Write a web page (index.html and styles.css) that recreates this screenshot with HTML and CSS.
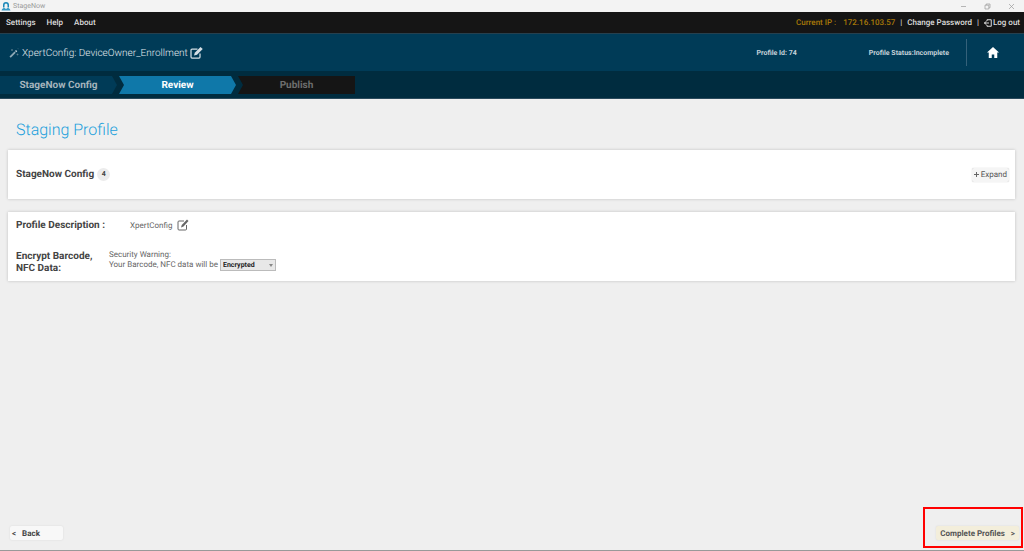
FILE: index.html
```
<!DOCTYPE html>
<html lang="en">
<head>
    <meta charset="UTF-8">
    <meta name="viewport" content="width=device-width, initial-scale=1.0">
    <title>StageNow</title>
    <link rel="stylesheet" href="styles.css">
</head>
<body>
    <div class="titlebar">
        <svg class="app-icon" width="10" height="10" viewBox="0 0 20 20">
            <path d="M4 8a6 6 0 0 1 12 0v5h-3V8a3 3 0 0 0-6 0v5H4z" fill="#1b87b8"/>
            <path d="M1 19c1-4 4-5 6-5l3 2 3-2c2 0 5 1 6 5z" fill="#3a9bc6"/>
        </svg>
        <span class="app-name">StageNow</span>
        <div class="window-buttons">
            <button type="button" aria-label="Minimize">
                <svg width="7" height="7" viewBox="0 0 7 7"><path d="M1 3.5h5"/></svg>
            </button>
            <button type="button" aria-label="Restore">
                <svg width="7" height="7" viewBox="0 0 7 7"><path d="M1 2.2h3.8v3.8H1zM2.2 2V1H6v3.8H5"/></svg>
            </button>
            <button type="button" aria-label="Close">
                <svg width="7" height="7" viewBox="0 0 7 7"><path d="M1 1l5 5M6 1L1 6"/></svg>
            </button>
        </div>
    </div>

    <nav class="menubar">
        <a href="#">Settings</a>
        <a href="#">Help</a>
        <a href="#">About</a>
        <div class="menu-right">
            <span class="ip-label">Current IP :</span>
            <span class="ip-value">172.16.103.57</span>
            <span class="bar">|</span>
            <a href="#">Change Password</a>
            <span class="bar">|</span>
            <a href="#" class="logout">
                <svg width="8" height="8" viewBox="0 0 16 16" fill="none" stroke="currentColor" stroke-width="2">
                    <path d="M6 4V1.5h8.5v13H6V12M0 8h10"/>
                    <path d="M5 4.5L1 8l4 3.5"/>
                </svg>
                Log out
            </a>
        </div>
    </nav>

    <header class="profile-header">
        <svg class="wand" width="10" height="10" viewBox="0 0 20 20">
            <path d="M1 17L11 7l2.5 2.5L3.5 19.5z" fill="#8fa9b6"/>
            <path d="M12 6l2-2 2.5 2.5-2 2z" fill="#c9d6dd"/>
            <path d="M6 2v4M4 4h4M17 11v4M15 13h4M18 1l1.5 1.5" stroke="#6f8d9c" stroke-width="1.2"/>
        </svg>
        <h1>XpertConfig: DeviceOwner_Enrollment</h1>
        <button type="button" class="icon-button" aria-label="Edit profile name">
            <svg width="13" height="12" viewBox="0 0 26 24">
                <path d="M15 4H4Q2 4 2 6v14q0 2 2 2h14q2 0 2-2v-7" fill="none" stroke="currentColor" stroke-width="2.5"/>
                <path d="M8 17l1.5-5.5L21 0l4.5 4L14 15.5z" fill="currentColor"/>
            </svg>
        </button>
        <span class="profile-id">Profile Id: 74</span>
        <span class="profile-status">Profile Status:Incomplete</span>
        <a href="#" class="home" aria-label="Home">
            <svg width="12" height="11" viewBox="0 0 24 22">
                <path d="M12 0l12 11h-3.5v11h-6v-7h-5v7h-6V11H0z" fill="#fff"/>
            </svg>
        </a>
    </header>

    <nav class="steps">
        <a href="#" class="step step-done">StageNow Config</a>
        <a href="#" class="step step-active">Review</a>
        <a href="#" class="step step-next">Publish</a>
    </nav>

    <main>
        <h2>Staging Profile</h2>

        <section class="card config-card">
            <h3>StageNow Config</h3>
            <span class="count">4</span>
            <button type="button" class="expand"><svg width="5" height="5" viewBox="0 0 5 5"><path d="M2.5 0v5M0 2.5h5" stroke="#666"/></svg>Expand</button>
        </section>

        <section class="card details-card">
            <div class="description-row">
                <h3>Profile Description :</h3>
                <span>XpertConfig</span>
                <button type="button" class="icon-button dark" aria-label="Edit description">
                    <svg width="12" height="12" viewBox="0 0 24 24">
                        <path d="M14 4H4Q2 4 2 6v14q0 2 2 2h13q2 0 2-2v-8" fill="none" stroke="currentColor" stroke-width="2"/>
                        <path d="M8 17l1.5-5L20 1l3 3-10 11z" fill="currentColor"/>
                    </svg>
                </button>
            </div>
            <div class="encrypt-row">
                <h3>Encrypt Barcode,<br>NFC Data:</h3>
                <label for="encryption">Security Warning:<br>Your Barcode, NFC data will be</label>
                <div class="select-box">
                    <select id="encryption">
                        <option>Encrypted</option>
                        <option>Not Encrypted</option>
                    </select>
                    <svg class="arrow" width="4" height="3" viewBox="0 0 4 3"><path d="M0 0h4L2 3z" fill="#888"/></svg>
                </div>
            </div>
        </section>
    </main>

    <footer>
        <button type="button" class="back"><span>&lt;</span>Back</button>
        <div class="complete-box">
            <button type="button" class="complete">Complete Profiles<span>&gt;</span></button>
        </div>
    </footer>
</body>
</html>
```

FILE: styles.css
```
* {
    box-sizing: border-box;
}

body {
    margin: 0;
    min-height: 100vh;
    display: flex;
    flex-direction: column;
    background-color: #efefef;
    border-bottom: 1px solid #999;
    font-family: Roboto, Arial, sans-serif;
    font-size: 8px;
    color: #444;
    text-rendering: geometricPrecision;
}

h1, h2, h3 {
    margin: 0;
}

a {
    color: inherit;
    text-decoration: none;
}

button, select {
    font-family: inherit;
    color: inherit;
    text-rendering: inherit;
}

button {
    display: flex;
    align-items: center;
    border: none;
    padding: 0;
    background: none;
    cursor: pointer;
}

/* window title bar */
.titlebar {
    display: flex;
    align-items: center;
    height: 12px;
    padding: 0 9px 0 1px;
    background-color: #f3f3f3;
}

.app-name {
    margin-left: 2px;
    font-size: 7px;
    color: #999;
}

.window-buttons {
    display: flex;
    gap: 17px;
    margin-left: auto;
}

.window-buttons svg {
    fill: none;
    stroke: #999;
    stroke-width: 0.7;
}

/* menu */
.menubar {
    display: flex;
    align-items: center;
    gap: 11px;
    height: 22px;
    padding: 0 4px 0 6px;
    background-color: #151515;
    border-bottom: 1px solid #26404e;
    font-size: 8px;
    font-weight: 500;
    color: #ddd;
}

.menu-right {
    display: flex;
    align-items: center;
    gap: 5px;
    margin-left: auto;
}

.ip-label, .ip-value {
    color: #a87908;
}

.ip-label {
    margin-right: 2px;
}

.logout {
    display: flex;
    align-items: center;
    gap: 1px;
}

/* profile header */
.profile-header {
    display: flex;
    align-items: center;
    height: 37px;
    padding: 0 25px 0 9px;
    background-color: #003b57;
    color: #c5d2da;
}

.profile-header h1 {
    margin: 0 2px 0 3px;
    padding-top: 1px;
    font-size: 10px;
    font-weight: 300;
    color: #e2eaee;
}

.icon-button {
    color: #d5dfe5;
}

.icon-button.dark {
    color: #666;
}

.profile-id {
    margin-left: auto;
    font-size: 7px;
    font-weight: 700;
}

.profile-status {
    margin: 0 17px 0 72px;
    font-size: 7px;
    font-weight: 700;
}

.home {
    display: flex;
    align-items: center;
    height: 27px;
    padding-left: 20px;
    border-left: 1px solid #35617a;
}

/* wizard steps */
.steps {
    display: flex;
    gap: 2px;
    padding: 5px 0 4px;
    background-color: #002c3f;
    border-bottom: 1px solid #2a4a5c;
}

.step {
    width: 117px;
    padding-top: 1px;
    line-height: 17px;
    text-align: center;
    font-size: 10px;
    font-weight: 700;
}

.step-done {
    background-color: #003b57;
    color: #a5b5bd;
    clip-path: polygon(0 0, 112px 0, 100% 50%, 112px 100%, 0 100%);
}

.step-active {
    background-color: #0f78a9;
    color: #fff;
    clip-path: polygon(0 0, 112px 0, 100% 50%, 112px 100%, 0 100%, 5px 50%);
}

.step-next {
    background-color: #151515;
    color: #6e6e6e;
    clip-path: polygon(0 0, 100% 0, 100% 100%, 0 100%, 5px 50%);
}

main {
    flex: 1;
    padding: 21px 8px 0;
}

h2 {
    padding-left: 8px;
    line-height: 20px;
    font-size: 16px;
    font-weight: 300;
    color: #1c9fdc;
}

h3 {
    padding-top: 1px;
    font-size: 10px;
    line-height: 12px;
    font-weight: 700;
}

.card {
    margin-right: 1px;
    padding: 0 6px 0 8px;
    background-color: #fff;
    box-shadow: 0 0 3px rgba(0, 0, 0, 0.2);
}

.card h3 {
    color: #444;
}

.config-card {
    display: flex;
    align-items: center;
    height: 49px;
    margin-top: 10px;
}

.count {
    width: 13px;
    margin-left: 3px;
    line-height: 13px;
    border-radius: 50%;
    background-color: #ececec;
    text-align: center;
    font-size: 7px;
    font-weight: 700;
}

.expand {
    gap: 2px;
    height: 14px;
    margin-left: auto;
    padding: 0 2px;
    border-radius: 2px;
    background-color: #f5f5f5;
    box-shadow: 0 0 1px rgba(0, 0, 0, 0.3);
    font-size: 8px;
    color: #555;
}

.details-card {
    margin-top: 13px;
    padding-top: 6px;
    padding-bottom: 6px;
    font-size: 8px;
    color: #666;
}

.description-row {
    display: flex;
    align-items: center;
    height: 14px;
}

.description-row h3 {
    width: 114px;
}

.description-row .icon-button {
    margin-left: 5px;
}

.encrypt-row {
    display: flex;
    align-items: flex-start;
    margin-top: 18px;
}

.encrypt-row h3 {
    width: 93px;
}

.encrypt-row label {
    line-height: 10px;
}

.select-box {
    position: relative;
    margin: 9px 0 0 2px;
}

.select-box select {
    display: block;
    width: 56px;
    height: 12px;
    padding: 0 2px;
    border: 1px solid #bbb;
    background-color: #e8e8e8;
    appearance: none;
    font-size: 7px;
    font-weight: 700;
    color: #222;
}

.select-box .arrow {
    position: absolute;
    top: 5px;
    right: 3px;
}

/* bottom buttons */
footer {
    display: flex;
    align-items: flex-end;
    justify-content: space-between;
    padding: 0 1px 2px 10px;
}

.back, .complete {
    height: 14px;
    border-radius: 2px;
    box-shadow: 0 0 2px rgba(0, 0, 0, 0.1);
    font-size: 8px;
    font-weight: 700;
}

.back {
    gap: 6px;
    width: 53px;
    margin-bottom: 8px;
    padding-left: 2px;
    background-color: #f8f8f8;
}

.complete-box {
    padding: 17px 2px 6px 11px;
    border: 2px solid #f00;
}

.complete {
    gap: 6px;
    padding: 0 4px;
    background-color: #f3eedb;
    color: #555;
}
```
